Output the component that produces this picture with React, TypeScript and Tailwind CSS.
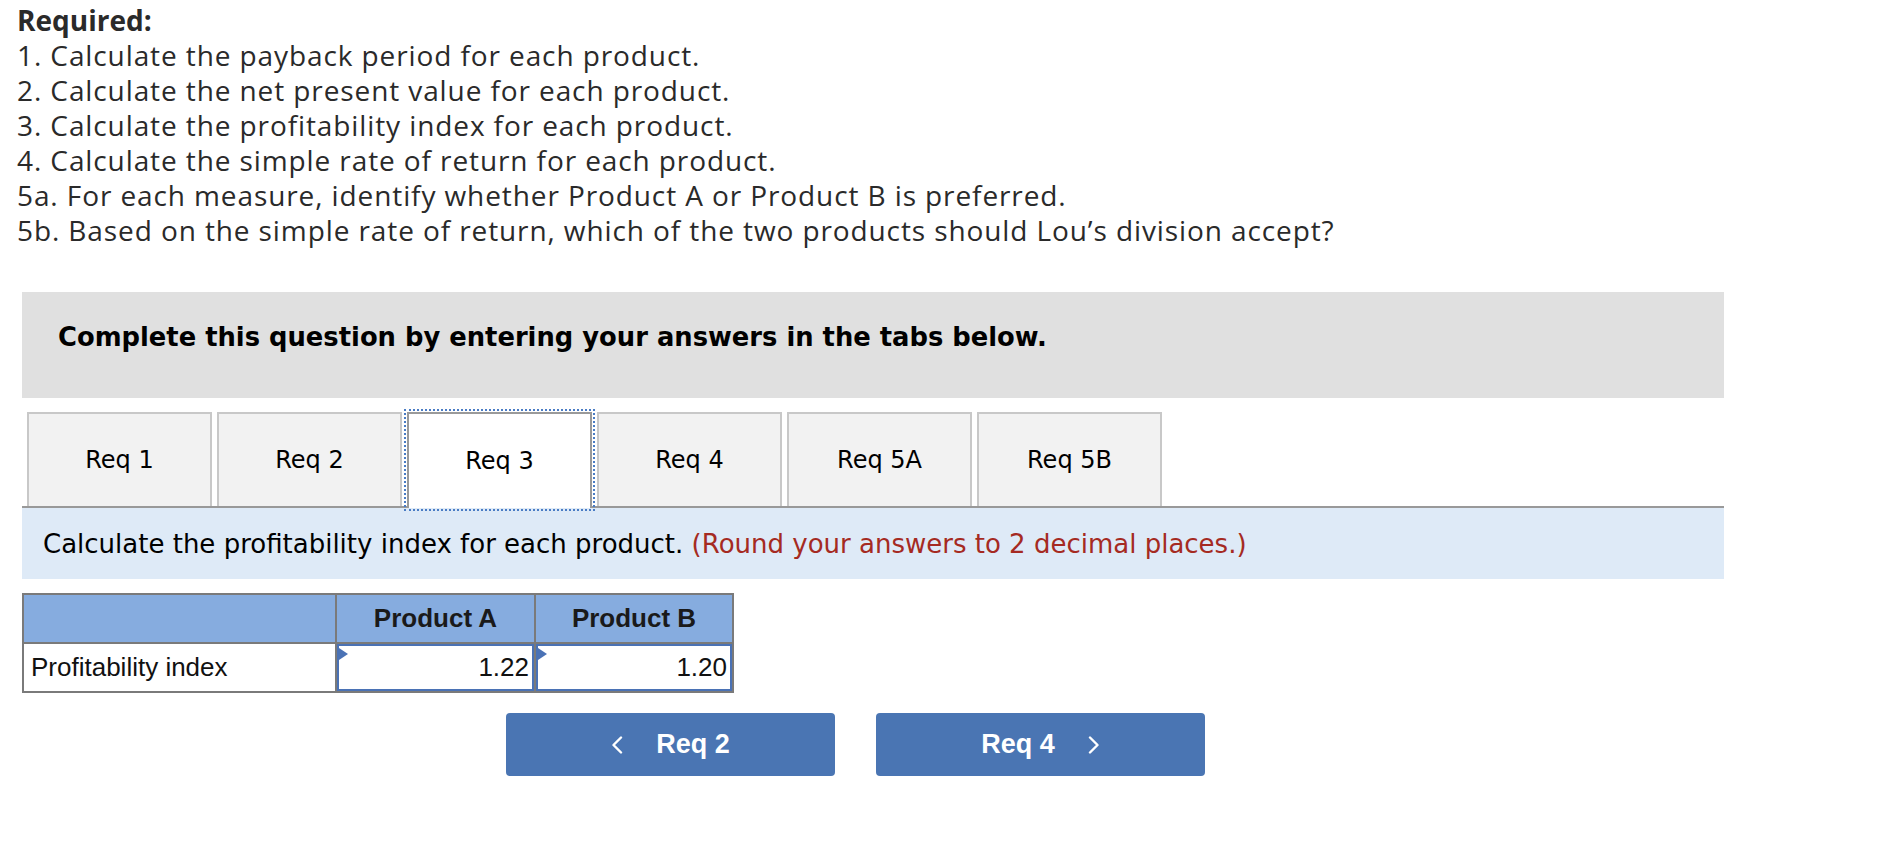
const lines = [
  "1. Calculate the payback period for each product.",
  "2. Calculate the net present value for each product.",
  "3. Calculate the profitability index for each product.",
  "4. Calculate the simple rate of return for each product.",
  "5a. For each measure, identify whether Product A or Product B is preferred.",
  "5b. Based on the simple rate of return, which of the two products should Lou\u2019s division accept?",
];

const tabs = ["Req 1", "Req 2", "Req 3", "Req 4", "Req 5A", "Req 5B"];

function ValueCell({ value }: { value: string }) {
  return (
    <td className="p-0 border-2 border-[#7a7a7a] h-[49px]">
      <div className="relative h-full border-2 border-[#4a72b5] flex items-center justify-end pr-[3px] text-[26px] text-[#111]">
        <span className="absolute left-0 top-[2px] w-0 h-0 border-y-[6px] border-y-transparent border-l-[9px] border-l-[#4a72b5]" />
        {value}
      </div>
    </td>
  );
}

function Chevron({ dir }: { dir: "left" | "right" }) {
  return (
    <svg width="12" height="18" viewBox="0 0 12 18" fill="none" stroke="white" strokeWidth="2.4" strokeLinecap="round" strokeLinejoin="round">
      {dir === "left" ? <polyline points="10,1.5 2.5,9 10,16.5" /> : <polyline points="2,1.5 9.5,9 2,16.5" />}
    </svg>
  );
}

export default function App() {
  return (
    <div className="w-[1890px] h-[844px] bg-white overflow-hidden">
      <div className="pl-[17px] pt-[3px] font-['Open_Sans',sans-serif] text-[28px] tracking-[0.9px] leading-[35px] text-[#2a2a2a]">
        <div className="font-bold tracking-normal">Required:</div>
        {lines.map((l) => (
          <div key={l}>{l}</div>
        ))}
      </div>

      <div className="ml-[22px] w-[1702px] mt-[44px]">
        <div className="h-[106px] bg-[#e0e0e0] pl-[36px] pt-[32px] font-['DejaVu_Sans',sans-serif] font-bold text-[25.8px] leading-[26px] text-black">
          Complete this question by entering your answers in the tabs below.
        </div>

        <div className="mt-[14px] flex gap-[5px] pl-[5px] border-b-2 border-[#999]">
          {tabs.map((t) => {
            const active = t === "Req 3";
            return (
              <div
                key={t}
                className={
                  active
                    ? "relative -mb-[2px] w-[185px] h-[96px] flex items-center justify-center bg-white border-2 border-b-0 border-[#9a9a9a] outline-2 outline-dotted outline-[#4a7cc4] outline-offset-[1px] font-['DejaVu_Sans',sans-serif] text-[24px] text-black"
                    : "w-[185px] h-[94px] flex items-center justify-center bg-[#f2f2f2] border-2 border-b-0 border-[#c8c8c8] font-['DejaVu_Sans',sans-serif] text-[24px] text-black"
                }
              >
                {t}
              </div>
            );
          })}
        </div>

        <div className="h-[71px] bg-[#deeaf7] flex items-center pl-[21px] pt-[2px] font-['DejaVu_Sans',sans-serif] text-[26px] text-black">
          <span>
            Calculate the profitability index for each product.{" "}
            <span className="text-[#a52a22]">(Round your answers to 2 decimal places.)</span>
          </span>
        </div>

        <table className="mt-[14px] border-collapse font-['Liberation_Sans',sans-serif]">
          <tbody>
            <tr className="bg-[#86acdf]">
              <td className="w-[313px] h-[49px] border-2 border-[#7a7a7a]" />
              <td className="w-[199px] h-[49px] border-2 border-[#7a7a7a] text-center font-bold text-[26px] text-[#1a1a1a]">Product A</td>
              <td className="w-[198px] h-[49px] border-2 border-[#7a7a7a] text-center font-bold text-[26px] text-[#1a1a1a]">Product B</td>
            </tr>
            <tr>
              <td className="h-[49px] border-2 border-[#7a7a7a] pl-[7px] text-[26px] text-[#111]">Profitability index</td>
              <ValueCell value="1.22" />
              <ValueCell value="1.20" />
            </tr>
          </tbody>
        </table>

        <div className="mt-[20px] ml-[484px] flex gap-[41px] font-['Liberation_Sans',sans-serif]">
          <button className="w-[329px] h-[63px] rounded-[4px] bg-[#4a75b3] text-white font-bold text-[27px] flex items-center justify-center gap-[33px]">
            <Chevron dir="left" />
            <span>Req 2</span>
          </button>
          <button className="w-[329px] h-[63px] rounded-[4px] bg-[#4a75b3] text-white font-bold text-[27px] flex items-center justify-center gap-[33px]">
            <span>Req 4</span>
            <Chevron dir="right" />
          </button>
        </div>
      </div>
    </div>
  );
}
